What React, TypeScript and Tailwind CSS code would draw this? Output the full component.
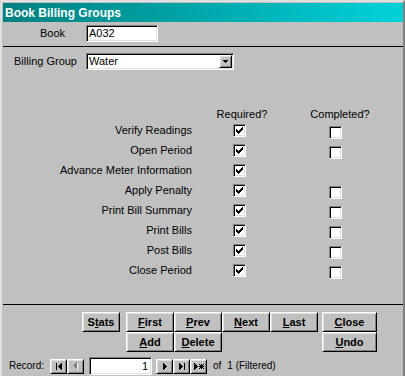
const sunken =
  "border border-t-[#808080] border-l-[#808080] border-r-white border-b-white shadow-[inset_1px_1px_#000,inset_-1px_-1px_#dfdfdf]";
const raised =
  "border border-t-white border-l-white border-r-black border-b-black shadow-[inset_1px_1px_#dfdfdf,inset_-1px_-1px_#808080]";

// left / right pointing pixel triangles, 4x7
function TriLeft({ x, y = 0, fill }: { x: number; y?: number; fill: string }) {
  return (
    <>
      {[0, 1, 2, 3].map((i) => (
        <rect key={i} x={x + i} y={y + 3 - i} width={1} height={1 + 2 * i} fill={fill} />
      ))}
    </>
  );
}

function TriRight({ x, fill }: { x: number; fill: string }) {
  return (
    <>
      {[0, 1, 2, 3].map((i) => (
        <rect key={i} x={x + i} y={i} width={1} height={7 - 2 * i} fill={fill} />
      ))}
    </>
  );
}

const checkPixels = [
  "......#",
  ".....##",
  "#...###",
  "##.###.",
  "#####..",
  ".###...",
  "..#....",
];

function CheckBox({ checked, className = "" }: { checked: boolean; className?: string }) {
  return (
    <div className={`w-[13px] h-[13px] bg-white shrink-0 flex items-start justify-start ${sunken} ${className}`}>
      {checked && (
        <svg width="7" height="7" className="ml-[2px] mt-[2px]" shapeRendering="crispEdges">
          {checkPixels.flatMap((row, y) =>
            row.split("").map((c, x) => (c === "#" ? <rect key={`${x}-${y}`} x={x} y={y} width={1} height={1} fill="#000" /> : null))
          )}
        </svg>
      )}
    </div>
  );
}

function Btn({ label, hot, className = "" }: { label: string; hot: number; className?: string }) {
  return (
    <button className={`h-[20px] bg-[#c0c0c0] font-bold text-[11px] flex items-center justify-center ${raised} ${className}`}>
      <span>
        {label.slice(0, hot)}
        <span className="underline underline-offset-[1px]">{label[hot]}</span>
        {label.slice(hot + 1)}
      </span>
    </button>
  );
}

function NavBtn({ children }: { children: React.ReactNode }) {
  return (
    <div className={`w-[17px] h-[15px] bg-[#c0c0c0] flex items-center justify-center ${raised}`}>
      {children}
    </div>
  );
}

const steps = [
  { label: "Verify Readings", done: true },
  { label: "Open Period", done: true },
  { label: "Advance Meter Information", done: false },
  { label: "Apply Penalty", done: true },
  { label: "Print Bill Summary", done: true },
  { label: "Print Bills", done: true },
  { label: "Post Bills", done: true },
  { label: "Close Period", done: true },
];

export default function App() {
  return (
    <div className="w-[405px] h-[376px] overflow-hidden bg-[#c0c0c0] border-l-2 border-t-2 border-r-2 border-l-[#dfdfdf] border-t-[#dfdfdf] border-r-[#808080] pl-px pt-px flex flex-col font-['Liberation_Sans',Arial,sans-serif] text-[11px] text-black leading-none">
      {/* title */}
      <div className="h-[19px] shrink-0 bg-linear-to-r from-[#008080] to-[#00d2da] flex items-center pl-[2px] text-white font-bold text-[12px]">
        Book Billing Groups
      </div>

      {/* header */}
      <div className="h-[24px] shrink-0 flex items-start pt-[3px]">
        <span className="w-[62px] text-right leading-[17px]">Book</span>
        <div className={`ml-[21px] w-[72px] h-[17px] bg-white pl-[2px] leading-[15px] ${sunken}`}>A032</div>
      </div>
      <div className="h-px bg-black shrink-0" />

      {/* detail */}
      <div className="flex-1 flex flex-col">
        <div className="mt-[6px] flex items-start">
          <span className="w-[74px] text-right leading-[17px]">Billing Group</span>
          <div className={`ml-[9px] w-[148px] h-[17px] bg-white flex justify-between ${sunken}`}>
            <span className="pl-[2px] leading-[15px]">Water</span>
            <div className={`w-[13px] h-[13px] mt-px mr-px bg-[#c0c0c0] flex items-center justify-center ${raised}`}>
              <svg width="5" height="3" shapeRendering="crispEdges">
                <rect x="0" y="0" width="5" height="1" fill="#000" />
                <rect x="1" y="1" width="3" height="1" fill="#000" />
                <rect x="2" y="2" width="1" height="1" fill="#000" />
              </svg>
            </div>
          </div>
        </div>

        <div className="mt-[34px] h-[20px] flex items-center">
          <span className="ml-[209px] w-[60px] text-center">Required?</span>
          <span className="ml-[33px] w-[70px] text-center">Completed?</span>
        </div>

        {steps.map((s) => (
          <div key={s.label} className="h-[20px] flex items-start">
            <span className="w-[189px] text-right leading-[13px]">{s.label}</span>
            <CheckBox checked className="ml-[41px]" />
            {s.done && <CheckBox checked={false} className="ml-[83px] mt-[2px]" />}
          </div>
        ))}
      </div>
      <div className="h-px bg-black shrink-0" />

      {/* footer buttons */}
      <div className="h-[51px] shrink-0 flex items-start pt-[7px] pl-[79px]">
        <Btn label="Stats" hot={1} className="w-[38px]" />
        <div className="ml-[6px] grid grid-cols-[48px_48px_48px_48px] grid-rows-[20px_20px]">
          <Btn label="First" hot={0} />
          <Btn label="Prev" hot={0} />
          <Btn label="Next" hot={0} />
          <Btn label="Last" hot={0} />
          <Btn label="Add" hot={0} />
          <Btn label="Delete" hot={0} />
        </div>
        <div className="ml-[4px] w-[55px] flex flex-col">
          <Btn label="Close" hot={0} />
          <Btn label="Undo" hot={0} />
        </div>
      </div>

      {/* record navigator */}
      <div className="h-[20px] shrink-0 flex items-center pl-[6px] text-[10px]">
        <span className="w-[41px]">Record:</span>
        <NavBtn>
          <svg width="6" height="7" shapeRendering="crispEdges">
            <rect x="0" y="0" width="1" height="7" fill="#000" />
            <TriLeft x={2} fill="#000" />
          </svg>
        </NavBtn>
        <NavBtn>
          <svg width="5" height="8" shapeRendering="crispEdges">
            <TriLeft x={1} y={1} fill="#fff" />
            <TriLeft x={0} fill="#808080" />
          </svg>
        </NavBtn>
        <div className={`ml-[5px] w-[63px] h-[18px] bg-white text-right pr-[3px] leading-[16px] text-[11px] ${sunken}`}>1</div>
        <div className="ml-[4px] flex">
          <NavBtn>
            <svg width="4" height="7" shapeRendering="crispEdges">
              <TriRight x={0} fill="#000" />
            </svg>
          </NavBtn>
          <NavBtn>
            <svg width="6" height="7" shapeRendering="crispEdges">
              <TriRight x={0} fill="#000" />
              <rect x="5" y="0" width="1" height="7" fill="#000" />
            </svg>
          </NavBtn>
          <NavBtn>
            <svg width="10" height="7" shapeRendering="crispEdges">
              <TriRight x={0} fill="#000" />
              <rect x="5" y="1" width="1" height="1" fill="#000" />
              <rect x="7" y="1" width="1" height="1" fill="#000" />
              <rect x="9" y="1" width="1" height="1" fill="#000" />
              <rect x="6" y="2" width="3" height="1" fill="#000" />
              <rect x="5" y="3" width="5" height="1" fill="#000" />
              <rect x="6" y="4" width="3" height="1" fill="#000" />
              <rect x="5" y="5" width="1" height="1" fill="#000" />
              <rect x="7" y="5" width="1" height="1" fill="#000" />
              <rect x="9" y="5" width="1" height="1" fill="#000" />
            </svg>
          </NavBtn>
        </div>
        <span className="ml-[6px]">of</span>
        <span className="ml-[6px]">1 (Filtered)</span>
      </div>
    </div>
  );
}
